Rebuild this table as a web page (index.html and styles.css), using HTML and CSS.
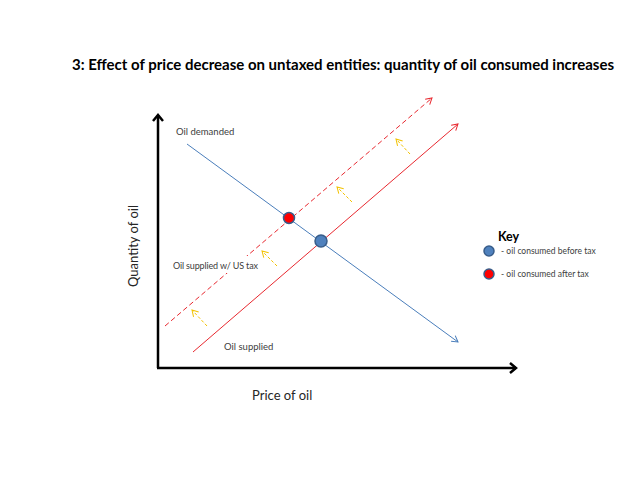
FILE: index.html
```html
<!DOCTYPE html>
<html>
<head>
<meta charset="utf-8">
<link rel="stylesheet" href="styles.css">
</head>
<body>
<div class="slide">
  <h1 class="title">3: Effect of price decrease on untaxed entities: quantity of oil consumed increases</h1>
  <svg class="canvas" width="640" height="480" viewBox="0 0 640 480" xmlns="http://www.w3.org/2000/svg">
    <defs>
      <marker id="axisHead" markerWidth="12" markerHeight="12" refX="9" refY="6" orient="auto" markerUnits="userSpaceOnUse">
        <path d="M3 1 L9 6 L3 11" fill="none" stroke="#000" stroke-width="2.5"/>
      </marker>
      <marker id="blueHead" markerWidth="10" markerHeight="10" refX="8" refY="5" orient="auto" markerUnits="userSpaceOnUse">
        <path d="M2 1.5 L8 5 L2 8.5" fill="none" stroke="#4a7ebb" stroke-width="1"/>
      </marker>
      <marker id="redHead" markerWidth="10" markerHeight="10" refX="8" refY="5" orient="auto" markerUnits="userSpaceOnUse">
        <path d="M2 1.5 L8 5 L2 8.5" fill="none" stroke="#e8282f" stroke-width="1"/>
      </marker>
      <marker id="yellowHead" markerWidth="10" markerHeight="10" refX="8" refY="5" orient="auto" markerUnits="userSpaceOnUse">
        <path d="M2 1.5 L8 5 L2 8.5" fill="none" stroke="#f2c200" stroke-width="1"/>
      </marker>
    </defs>

    <!-- axes -->
    <line class="axis" x1="158" y1="368" x2="158" y2="115" marker-end="url(#axisHead)"/>
    <line class="axis" x1="157" y1="368" x2="516" y2="368" marker-end="url(#axisHead)"/>

    <!-- curves -->
    <line class="demand" x1="187" y1="144" x2="458" y2="342" marker-end="url(#blueHead)"/>
    <line class="supply" x1="193" y1="352" x2="458" y2="124" marker-end="url(#redHead)"/>
    <line class="supply dashed" x1="165" y1="326" x2="432" y2="98" marker-end="url(#redHead)"/>

    <!-- shift arrows -->
    <line class="shift" x1="410" y1="154" x2="396" y2="139" marker-end="url(#yellowHead)"/>
    <line class="shift" x1="352" y1="202" x2="337" y2="187" marker-end="url(#yellowHead)"/>
    <line class="shift" x1="277" y1="266" x2="262" y2="251" marker-end="url(#yellowHead)"/>
    <line class="shift" x1="207" y1="326" x2="192" y2="310" marker-end="url(#yellowHead)"/>

    <!-- equilibria -->
    <circle class="dot red" cx="289" cy="218" r="5.5"/>
    <circle class="dot blue" cx="321" cy="241" r="6"/>

    <!-- labels -->
    <text class="label" x="176" y="135">Oil demanded</text>
    <rect class="label-bg" x="171" y="256" width="90" height="17"/>
    <text class="label tight" x="173" y="269">Oil supplied w/ US tax</text>
    <text class="label" x="224" y="350">Oil supplied</text>
    <text class="axis-label" x="252" y="400">Price of oil</text>
    <text class="axis-label" x="138" y="246" text-anchor="middle" transform="rotate(-90 138 246)">Quantity of oil</text>

    <!-- key -->
    <text class="key-title" x="498" y="241">Key</text>
    <circle class="dot blue" cx="489" cy="251" r="5"/>
    <text class="key-text" x="501" y="254">- oil consumed before tax</text>
    <circle class="dot red" cx="489" cy="274" r="5"/>
    <text class="key-text" x="501" y="277">- oil consumed after tax</text>
  </svg>
</div>
</body>
</html>
```

FILE: styles.css
```css
html, body {
  margin: 0;
  padding: 0;
  background: #ffffff;
}

.slide {
  position: relative;
  width: 640px;
  height: 480px;
  overflow: hidden;
  background: #ffffff;
  font-family: Lato, "Open Sans", sans-serif;
}

.title {
  margin: 0;
  padding: 55px 0 0 72px;
  font-size: 15px;
  font-weight: 700;
  line-height: 18px;
  color: #000000;
  white-space: nowrap;
}

.canvas {
  position: absolute;
  left: 0;
  top: 0;
}

.axis {
  stroke: #000000;
  stroke-width: 2.5;
}

.demand {
  stroke: #4a7ebb;
  stroke-width: 1;
}

.supply {
  stroke: #e8282f;
  stroke-width: 1;
}

.dashed {
  stroke-dasharray: 5 3;
}

.shift {
  stroke: #f2c200;
  stroke-width: 1;
  stroke-dasharray: 3 2;
}

.dot {
  stroke: #385d8a;
  stroke-width: 1.5;
}

.dot.blue {
  fill: #4f81bd;
}

.dot.red {
  fill: #ff0000;
}

.label-bg {
  fill: #ffffff;
}

.label {
  font-family: Lato, "Open Sans", sans-serif;
  font-size: 9.5px;
  fill: #404040;
}

.label.tight {
  font-size: 9px;
  letter-spacing: -0.15px;
}

.axis-label {
  font-family: Lato, "Open Sans", sans-serif;
  font-size: 13px;
  fill: #262626;
}

.key-title {
  font-family: Lato, "Open Sans", sans-serif;
  font-size: 12.5px;
  font-weight: 700;
  fill: #000000;
}

.key-text {
  font-family: Lato, "Open Sans", sans-serif;
  font-size: 8.5px;
  fill: #404040;
}
```
